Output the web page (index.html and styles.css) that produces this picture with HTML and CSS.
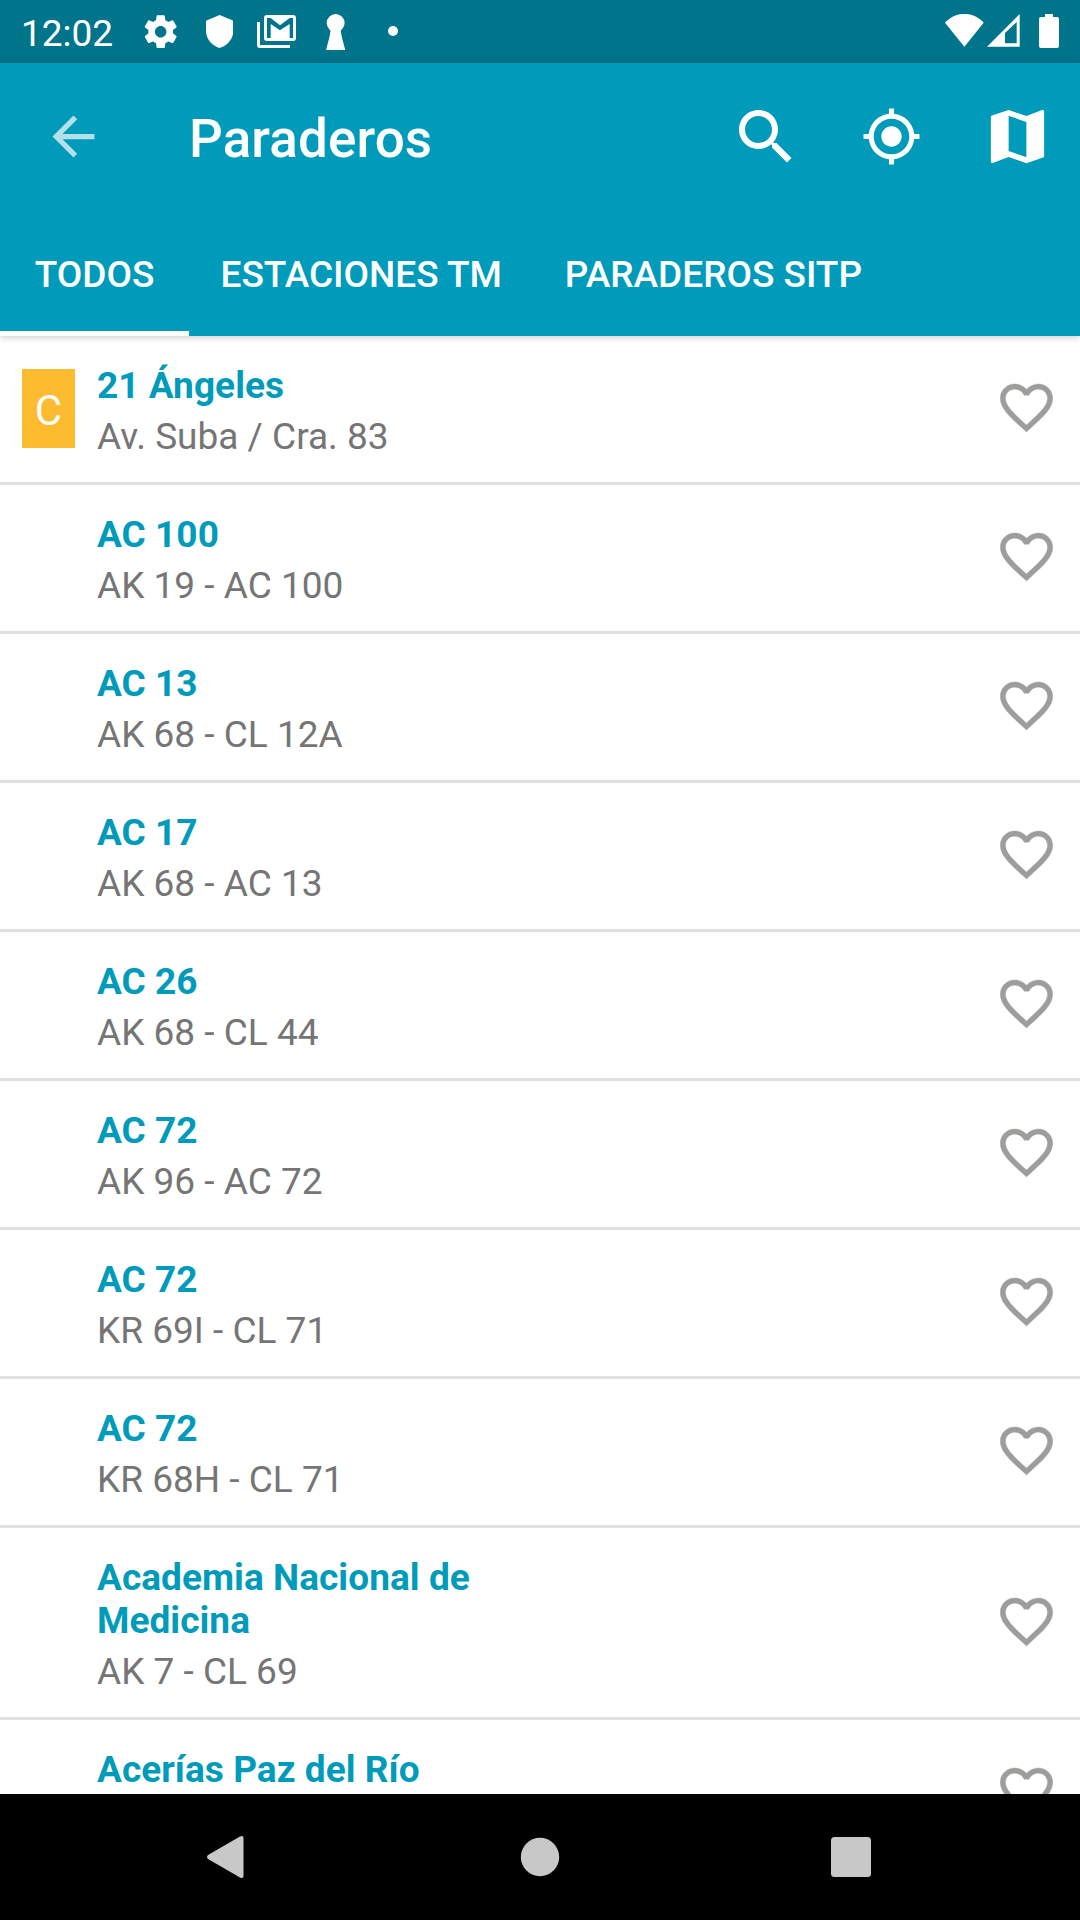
FILE: index.html
```html
<!DOCTYPE html>
<html lang="es">
<head>
<meta charset="utf-8">
<title>Paraderos</title>
<link rel="stylesheet" href="styles.css">
</head>
<body>
<svg class="defs" aria-hidden="true">
  <symbol id="heart" viewBox="0 0 24 24"><path d="M16.5 3c-1.74 0-3.41.81-4.5 2.09C10.91 3.81 9.24 3 7.5 3 4.42 3 2 5.42 2 8.5c0 3.78 3.4 6.86 8.55 11.54L12 21.35l1.45-1.32C18.6 15.36 22 12.28 22 8.5 22 5.42 19.58 3 16.5 3zm-4.4 15.55l-.1.1-.1-.1C7.14 14.24 4 11.39 4 8.5 4 6.5 5.5 5 7.5 5c1.54 0 3.04.99 3.57 2.36h1.87C13.46 5.99 14.96 5 16.5 5c2 0 3.5 1.5 3.5 3.5 0 2.89-3.14 5.74-7.9 10.05z"/></symbol>
</svg>
<div class="screen">
  <div class="status">
    <span class="clock">12:02</span>
    <div class="notifications">
      <svg class="gear" viewBox="0 0 24 24"><path d="M19.43 12.98c.04-.32.07-.64.07-.98s-.03-.66-.07-.98l2.11-1.65c.19-.15.24-.42.12-.64l-2-3.46c-.12-.22-.39-.3-.61-.22l-2.49 1c-.52-.4-1.08-.73-1.69-.98l-.38-2.65C14.46 2.18 14.25 2 14 2h-4c-.25 0-.46.18-.49.42l-.38 2.65c-.61.25-1.17.59-1.69.98l-2.49-1c-.23-.09-.49 0-.61.22l-2 3.46c-.13.22-.07.49.12.64l2.11 1.65c-.04.32-.07.65-.07.98s.03.66.07.98l-2.11 1.65c-.19.15-.24.42-.12.64l2 3.46c.12.22.39.3.61.22l2.49-1c.52.4 1.08.73 1.69.98l.38 2.65c.03.24.24.42.49.42h4c.25 0 .46-.18.49-.42l.38-2.65c.61-.25 1.17-.59 1.69-.98l2.49 1c.23.09.49 0 .61-.22l2-3.46c.12-.22.07-.49-.12-.64l-2.11-1.65zM12 15.500c-1.93 0-3.5-1.57-3.5-3.5s1.57-3.5 3.5-3.5 3.5 1.57 3.5 3.5-1.57 3.5-3.5 3.5z"/></svg>
      <svg class="shield" viewBox="0 0 82 99"><path d="M41 0L79 16Q82 17 82 20V48C82 72 64 93 41 99C18 93 0 72 0 48V20Q0 17 3 16Z"/></svg>
      <svg class="mail" viewBox="0 0 117 99"><path fill-rule="evenodd" d="M30 0H108Q117 0 117 9V69Q117 78 108 78H30Q21 78 21 69V9Q21 0 30 0ZM30 69H41V27L69 46L98 27V69H108V9H98L69 31L41 9H30Z"/><path d="M0 21H9V90H99V99H9Q0 99 0 90Z"/></svg>
      <svg class="keyhole" viewBox="0 0 58 109"><circle cx="29" cy="27" r="27"/><path d="M14 44H44C45 68 53 86 58 109H0C5 86 13 68 14 44Z"/></svg>
      <svg class="dot" viewBox="0 0 10 10"><circle cx="5" cy="5" r="5"/></svg>
    </div>
    <div class="signals">
      <svg class="wifi" viewBox="0 0 116 98"><path d="M58 98L0 26C32-9 84-9 116 26Z"/></svg>
      <svg class="cell" viewBox="0 0 98 98"><path fill-rule="evenodd" d="M0 98L98 0V98ZM54 88H89V24L54 57Z"/></svg>
      <svg class="battery" viewBox="0 0 60 102"><path d="M18 0H42V9H54Q60 9 60 15V96Q60 102 54 102H6Q0 102 0 96V15Q0 9 6 9H18Z"/></svg>
    </div>
  </div>
  <header class="appbar">
    <div class="toolbar">
      <svg class="back" viewBox="0 0 24 24"><path d="M20 11H7.83l5.59-5.59L12 4l-8 8 8 8 1.41-1.41L7.83 13H20v-2z"/></svg>
      <h1 class="title">Paraderos</h1>
      <div class="actions">
        <span class="action"><svg class="search" viewBox="0 0 24 24"><path d="M15.5 14h-.79l-.28-.27C15.41 12.59 16 11.11 16 9.5 16 5.91 13.09 3 9.5 3S3 5.91 3 9.5 5.91 16 9.5 16c1.61 0 3.09-.59 4.23-1.57l.27.28v.79l5 4.99L20.49 19l-4.99-5zm-6 0C7.01 14 5 11.99 5 9.5S7.01 5 9.5 5 14 7.01 14 9.5 11.99 14 9.5 14z"/></svg></span>
        <span class="action"><svg class="locate" viewBox="0 0 24 24"><path d="M12 8c-2.21 0-4 1.79-4 4s1.79 4 4 4 4-1.79 4-4-1.79-4-4-4zm8.94 3c-.46-4.17-3.77-7.48-7.94-7.94V1h-2v2.06C6.83 3.52 3.52 6.83 3.06 11H1v2h2.06c.46 4.17 3.77 7.48 7.94 7.94V23h2v-2.06c4.17-.46 7.48-3.77 7.94-7.94H23v-2h-2.06zM12 19c-3.87 0-7-3.13-7-7s3.13-7 7-7 7 3.13 7 7-3.13 7-7 7z"/></svg></span>
        <span class="action"><svg class="map" viewBox="0 0 24 24"><path d="M20.5 3l-.16.03L15 5.1 9 3 3.36 4.9c-.21.07-.36.25-.36.48V20.5c0 .28.22.5.5.5l.16-.03L9 18.9l6 2.1 5.64-1.9c.21-.07.36-.25.36-.48V3.5c0-.28-.22-.5-.5-.5zM15 19l-6-2.11V5l6 2.11V19z"/></svg></span>
      </div>
    </div>
    <nav class="tabs">
      <span class="tab active">TODOS</span>
      <span class="tab">ESTACIONES TM</span>
      <span class="tab">PARADEROS SITP</span>
    </nav>
  </header>
  <main class="list">
    <div class="row"><div class="lead"><span class="badge">C</span></div><div class="text"><div class="name">21 Ángeles</div><div class="address">Av. Suba / Cra. 83</div></div><svg class="heart"><use href="#heart"/></svg></div>
    <div class="row"><div class="lead"></div><div class="text"><div class="name">AC 100</div><div class="address">AK 19 - AC 100</div></div><svg class="heart"><use href="#heart"/></svg></div>
    <div class="row"><div class="lead"></div><div class="text"><div class="name">AC 13</div><div class="address">AK 68 - CL 12A</div></div><svg class="heart"><use href="#heart"/></svg></div>
    <div class="row"><div class="lead"></div><div class="text"><div class="name">AC 17</div><div class="address">AK 68 - AC 13</div></div><svg class="heart"><use href="#heart"/></svg></div>
    <div class="row"><div class="lead"></div><div class="text"><div class="name">AC 26</div><div class="address">AK 68 - CL 44</div></div><svg class="heart"><use href="#heart"/></svg></div>
    <div class="row"><div class="lead"></div><div class="text"><div class="name">AC 72</div><div class="address">AK 96 - AC 72</div></div><svg class="heart"><use href="#heart"/></svg></div>
    <div class="row"><div class="lead"></div><div class="text"><div class="name">AC 72</div><div class="address">KR 69I - CL 71</div></div><svg class="heart"><use href="#heart"/></svg></div>
    <div class="row"><div class="lead"></div><div class="text"><div class="name">AC 72</div><div class="address">KR 68H - CL 71</div></div><svg class="heart"><use href="#heart"/></svg></div>
    <div class="row"><div class="lead"></div><div class="text"><div class="name">Academia Nacional de Medicina</div><div class="address">AK 7 - CL 69</div></div><svg class="heart"><use href="#heart"/></svg></div>
    <div class="row"><div class="lead"></div><div class="text"><div class="name">Acerías Paz del Río</div><div class="address">&nbsp;</div></div><svg class="heart"><use href="#heart"/></svg></div>
  </main>
  <footer class="navbar">
    <svg class="nav-back" viewBox="0 0 42 42"><path d="M1 19L33 .5Q36.500-1 36.500 2V40Q36.500 43 33 41.500L1 23Q-1 21 1 19Z"/></svg>
    <svg class="nav-home" viewBox="0 0 40 40"><circle cx="20" cy="20" r="19.200"/></svg>
    <svg class="nav-recent" viewBox="0 0 40 40"><rect width="40" height="40" rx="3.500"/></svg>
  </footer>
</div>
</body>
</html>
```
FILE: styles.css
```css
* { box-sizing: border-box; }
body { margin: 0; font-family: Roboto, "Noto Sans", sans-serif; font-size: 37px; line-height: 43px; background: #fff; }
svg { display: block; flex: none; fill: #fff; }
.defs { width: 0; height: 0; position: absolute; }
.screen { width: 1080px; height: 1920px; display: flex; flex-direction: column; overflow: hidden; }

.status { height: 63px; flex: none; display: flex; align-items: flex-start; background: #00748b; color: #fff; padding-right: 21px; }
.clock { width: 124px; padding: 12px 0 0 21px; flex: none; }
.notifications { display: flex; flex: 1; }
.gear { width: 39.400px; height: 39.400px; margin: 12px 0 0 17.300px; }
.shield { width: 27.300px; height: 33px; margin: 15px 0 0 25px; }
.mail { width: 39px; height: 33px; margin: 15px 0 0 24.300px; }
.keyhole { width: 19.300px; height: 36.300px; margin: 13.600px 0 0 29.300px; }
.dot { width: 10px; height: 10px; margin: 26px 0 0 43px; }
.signals { display: flex; }
.wifi { width: 38.700px; height: 32.700px; margin-top: 14px; }
.cell { width: 32.700px; height: 32.700px; margin: 14.300px 0 0 3.300px; }
.battery { width: 20px; height: 34px; margin: 14px 0 0 19px; }

.appbar { height: 273px; flex: none; background: #009bba; color: #fff; position: relative; z-index: 1; box-shadow: 0 1px 7px rgba(0, 0, 0, .22); }
.toolbar { height: 147px; display: flex; align-items: center; padding-left: 42px; }
.back { width: 63px; height: 63px; opacity: .7; }
.title { flex: 1; margin: 0; padding: 4px 0 0 84px; font-size: 53px; line-height: 62px; letter-spacing: .12px; font-weight: 500; }
.actions { display: flex; }
.action { width: 126px; height: 147px; display: flex; align-items: center; justify-content: center; }
.search { width: 72px; height: 72px; margin-left: 2px; }
.locate { width: 61px; height: 61px; }
.map { width: 71px; height: 71px; margin-bottom: 1px; }
.tabs { height: 126px; display: flex; }
.tab { padding: 43px 31.500px 0; font-weight: 500; white-space: nowrap; }
.tab.active { width: 189px; padding-inline: 0; text-align: center; border-bottom: 5px solid #fff; }

.list { flex: 1; min-height: 0; overflow: hidden; }
.row { display: flex; align-items: center; padding: 28px 22px 24px; border-bottom: 3px solid #e0e0e0; }
.lead { width: 75px; flex: none; }
.badge { display: block; width: 53px; height: 79px; margin: -2px 0 2px; padding-top: 17px; background: #fdbb30; color: #fff; font-size: 42px; line-height: 49px; text-align: center; }
.lead:has(.badge) { margin-block: -10px; padding-bottom: 2px; }
.text { flex: 1; }
.name { max-width: 400px; margin-bottom: 8px; color: #009bba; font-weight: 700; letter-spacing: .05px; }
.address { color: #757575; }
.heart { width: 63px; height: 63px; margin-bottom: 7px; fill: #9d9d9c; stroke: #9d9d9c; stroke-width: .12px; }

.navbar { height: 126px; flex: none; display: flex; align-items: center; justify-content: space-between; padding: 0 209px 0 207px; background: #000; }
.navbar svg { fill: #c8c8c8; }
.nav-back { width: 42px; height: 42px; }
.nav-home, .nav-recent { width: 40px; height: 40px; }
```
